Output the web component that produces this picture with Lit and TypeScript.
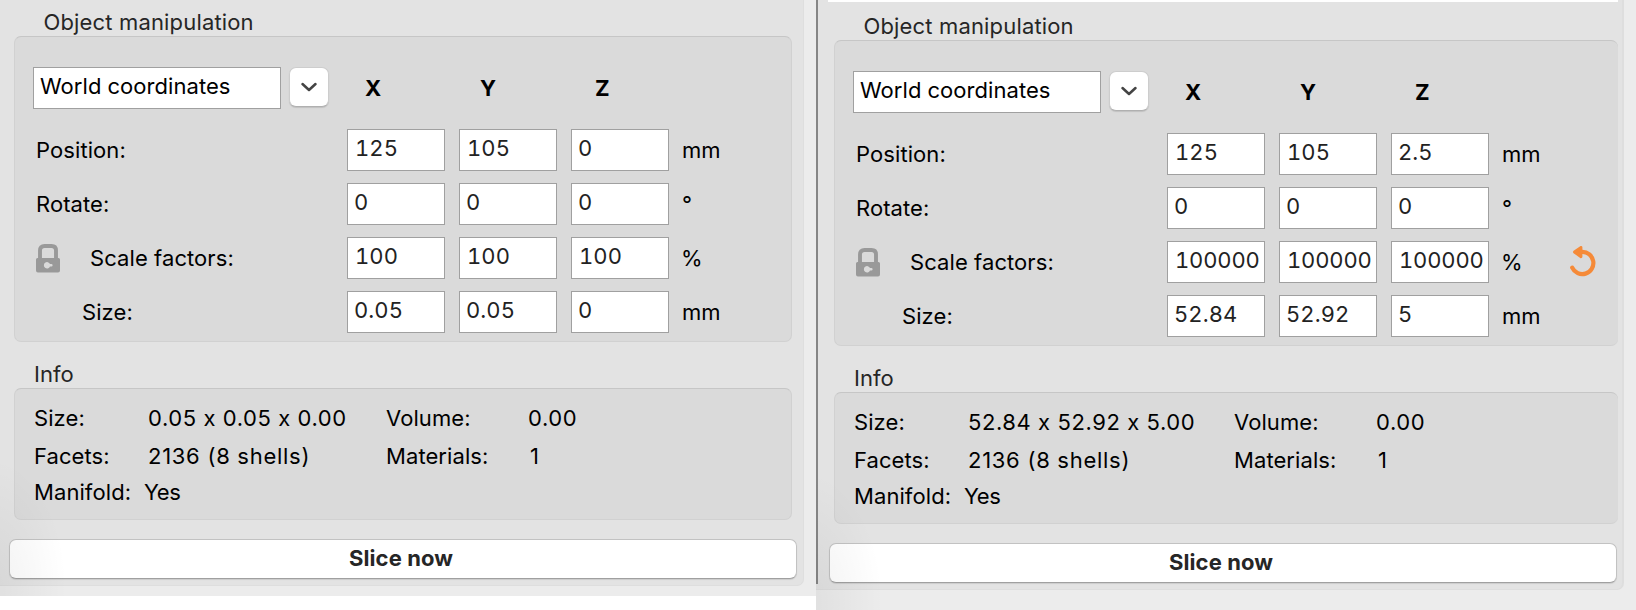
import { LitElement, html, css, svg, nothing } from "lit";
import { customElement, property } from "lit/decorators.js";
import { classMap } from "lit/directives/class-map.js";

interface Axes {
  label: string;
  kind: "plain" | "locked" | "indent";
  values: string[];
  unit: string;
  reset?: boolean;
}

interface ObjectState {
  rows: Axes[];
  size: string;
  facets: string;
  volume: string;
  materials: string;
  manifold: string;
}

const before: ObjectState = {
  rows: [
    { label: "Position:", kind: "plain", values: ["125", "105", "0"], unit: "mm" },
    { label: "Rotate:", kind: "plain", values: ["0", "0", "0"], unit: "°" },
    { label: "Scale factors:", kind: "locked", values: ["100", "100", "100"], unit: "%" },
    { label: "Size:", kind: "indent", values: ["0.05", "0.05", "0"], unit: "mm" },
  ],
  size: "0.05 x 0.05 x 0.00",
  facets: "2136 (8 shells)",
  volume: "0.00",
  materials: "1",
  manifold: "Yes",
};

const after: ObjectState = {
  rows: [
    { label: "Position:", kind: "plain", values: ["125", "105", "2.5"], unit: "mm" },
    { label: "Rotate:", kind: "plain", values: ["0", "0", "0"], unit: "°" },
    { label: "Scale factors:", kind: "locked", values: ["100000", "100000", "100000"], unit: "%", reset: true },
    { label: "Size:", kind: "indent", values: ["52.84", "52.92", "5"], unit: "mm" },
  ],
  size: "52.84 x 52.92 x 5.00",
  facets: "2136 (8 shells)",
  volume: "0.00",
  materials: "1",
  manifold: "Yes",
};

const lockIcon = html`<svg class="lock" width="24" height="29" viewBox="0 0 24 29">
  ${svg`<path d="M4 15V6.500Q4 2 8.500 2H15.500Q20 2 20 6.500V15" fill="none" stroke="#999" stroke-width="3.900"/>
  <path fill-rule="evenodd" fill="#999" d="M1.500 14H22.500Q24 14 24 15.500V26.500Q24 28.500 22 28.500H2Q0 28.500 0 26.500V15.500Q0 14 1.500 14ZM14 20A3.200 3.200 0 1 0 14 22.600H15.300A1.300 1.300 0 0 0 15.300 20Z"/>`}
</svg>`;

const resetIcon = html`<svg class="reset" width="26" height="31" viewBox="0 0 26 31">
  ${svg`<path d="M10 6.100L12 5.900A11.100 11.100 0 1 1 2.200 21.600" fill="none" stroke="#f58a38" stroke-width="4.200" stroke-linecap="round"/>
  <path d="M4.400 6L11 1.400V10.800Z" fill="#f58a38" stroke="#f58a38" stroke-width="2.800" stroke-linejoin="round"/>`}
</svg>`;

@customElement("object-panel")
class ObjectPanel extends LitElement {
  @property({ attribute: false }) data!: ObjectState;

  static styles = css`
    :host {
      display: block;
      color: #000;
      font: 400 22px/26px Inter, "Liberation Sans", sans-serif;
      letter-spacing: 0.08px;
      white-space: nowrap;
    }
    .title { height: 27px; color: #262626; }
    .object-title { padding-left: 43.5px; letter-spacing: 0.16px; }
    .info-title { padding: 19px 0 0 34px; letter-spacing: 0; }
    .group {
      box-sizing: border-box;
      width: var(--group-width, 778px);
      margin-left: 14px;
      border: 1px solid #d1d1d1;
      border-top-color: #c6c6c6;
      border-right-width: var(--group-edge, 1px);
      border-radius: 7px;
      background: #dadada;
    }
    .object { height: 306px; padding-top: 30px; }
    .head { display: flex; height: 42px; margin-bottom: 20px; padding-left: 18px; }
    .field {
      box-sizing: border-box;
      width: 98px;
      height: 42px;
      border: 1px solid #a0a0a0;
      background: #fff;
      color: #222;
      padding: 5px 0 0 6px;
      font-feature-settings: "tnum";
      letter-spacing: 0.1px;
    }
    .field.one { padding-left: 7px; }
    .field.long { letter-spacing: -0.15px; }
    .world { width: 248px; color: #000; padding-left: 6px; letter-spacing: 0.06px; }
    .drop {
      box-sizing: border-box;
      display: grid;
      place-items: center;
      width: 40px;
      height: 40px;
      margin: 0 36px 0 8px;
      border: 1px solid #cdcdcd;
      border-bottom-color: #b0b0b0;
      border-radius: 7px;
      background: #fff;
      box-shadow: 0 1px 1px rgba(0, 0, 0, 0.12);
    }
    .axis { width: 115px; padding-top: 8px; font-weight: 700; }
    .row { display: flex; height: 42px; margin-bottom: 12px; padding-left: 20px; }
    .label { display: flex; flex: none; width: 312px; }
    .label span { padding-top: 8px; }
    .label .plain { padding-left: 1px; }
    .label .indent { padding-left: 47px; }
    .lock { margin: 7px 30px 0 1px; }
    .fields { display: flex; flex: none; gap: 14px; }
    .unit { box-sizing: border-box; flex: none; width: 76px; padding: 8px 0 0 13px; }
    .unit.percent { padding-left: 12px; }
    .reset { flex: none; margin: 5px 0 0 5px; }
    .info { height: 132px; padding: 16px 0 0 19px; }
    .line { display: flex; height: 38px; }
    .line + .line { height: 36px; }
    .key { width: 114px; }
    .size { width: var(--size-width, 238px); }
    .key2 { width: 142px; }
    .num { letter-spacing: 0.58px; }
    .one-value { padding-left: 2px; }
    .wide { letter-spacing: 0.72px; }
    .yes { margin-left: -4px; letter-spacing: -0.4px; }
    .slice {
      box-sizing: border-box;
      width: 788px;
      height: 40px;
      margin: 19px 0 0 9px;
      padding: 5px 4px 0 0;
      border: 1px solid #c2c2c2;
      border-bottom-color: #a0a0a0;
      border-radius: 7px;
      background: #fff;
      box-shadow: 0 1px 1px rgba(0, 0, 0, 0.1);
      color: #262626;
      font-weight: 700;
      letter-spacing: 0.1px;
      text-align: center;
    }
  `;

  render() {
    const d = this.data;
    return html`
      <div class="title object-title">Object manipulation</div>
      <div class="group object">
        <div class="head">
          <div class="field world">World coordinates</div>
          <div class="drop">
            <svg width="18" height="12" viewBox="0 0 18 12"><path d="M2.500 3L9 9L15.500 3" fill="none" stroke="#444" stroke-width="2.500" stroke-linecap="round" stroke-linejoin="round"/></svg>
          </div>
          <div class="axis">X</div><div class="axis">Y</div><div class="axis">Z</div>
        </div>
        ${d.rows.map((r) => html`
          <div class="row">
            <div class="label">${r.kind === "locked" ? lockIcon : nothing}<span class=${r.kind}>${r.label}</span></div>
            <div class="fields">${r.values.map((v) => html`<div class=${classMap({ field: true, one: v[0] === "1", long: v.length > 5 })}>${v}</div>`)}</div>
            <div class=${classMap({ unit: true, percent: r.unit === "%" })}>${r.unit}</div>
            ${r.reset ? resetIcon : nothing}
          </div>`)}
      </div>
      <div class="title info-title">Info</div>
      <div class="group info">
        <div class="line"><div class="key">Size:</div><div class="size num">${d.size}</div><div class="key2">Volume:</div><div class="num">${d.volume}</div></div>
        <div class="line"><div class="key">Facets:</div><div class="size wide">${d.facets}</div><div class="key2">Materials:</div><div class="num one-value">${d.materials}</div></div>
        <div class="line"><div class="key">Manifold:</div><div class="yes">${d.manifold}</div></div>
      </div>
      <div class="slice">Slice now</div>
    `;
  }
}

@customElement("app-root")
class AppRoot extends LitElement {
  static styles = css`
    :host { display: flex; width: 1636px; height: 610px; overflow: hidden; background: #fff; }
    .window { position: relative; box-sizing: border-box; background: #ececec; overflow: hidden; }
    .window::after {
      content: "";
      position: absolute;
      inset: 0;
      pointer-events: none;
      background: radial-gradient(ellipse 75px 130px at -8px calc(100% - 8px), rgba(0, 0, 0, 0.055), transparent);
    }
    .left { width: 816px; height: 596px; }
    .right { width: 820px; height: 610px; }
    .pane { box-sizing: border-box; background: #e3e3e3; border: 1px solid #dedede; border-width: 0 1px 1px 0; border-radius: 0 0 7px 0; }
    .left .pane { width: 804px; height: 586px; padding-top: 9px; }
    .right .pane { width: 808px; height: 590px; border-right-width: 2px; padding-left: 4px; }
    .strip { width: 790px; height: 2px; margin: 0 0 11px 8px; background: #fff; }
    .right object-panel { --group-width: 784px; --group-edge: 0; --size-width: 266px; }
    .divider { position: absolute; left: 0; top: 0; width: 2px; height: 584px; background: #868686; }
  `;

  render() {
    return html`
      <div class="window left"><div class="pane"><object-panel .data=${before}></object-panel></div></div>
      <div class="window right">
        <div class="pane"><div class="strip"></div><object-panel .data=${after}></object-panel></div>
        <div class="divider"></div>
      </div>
    `;
  }
}
